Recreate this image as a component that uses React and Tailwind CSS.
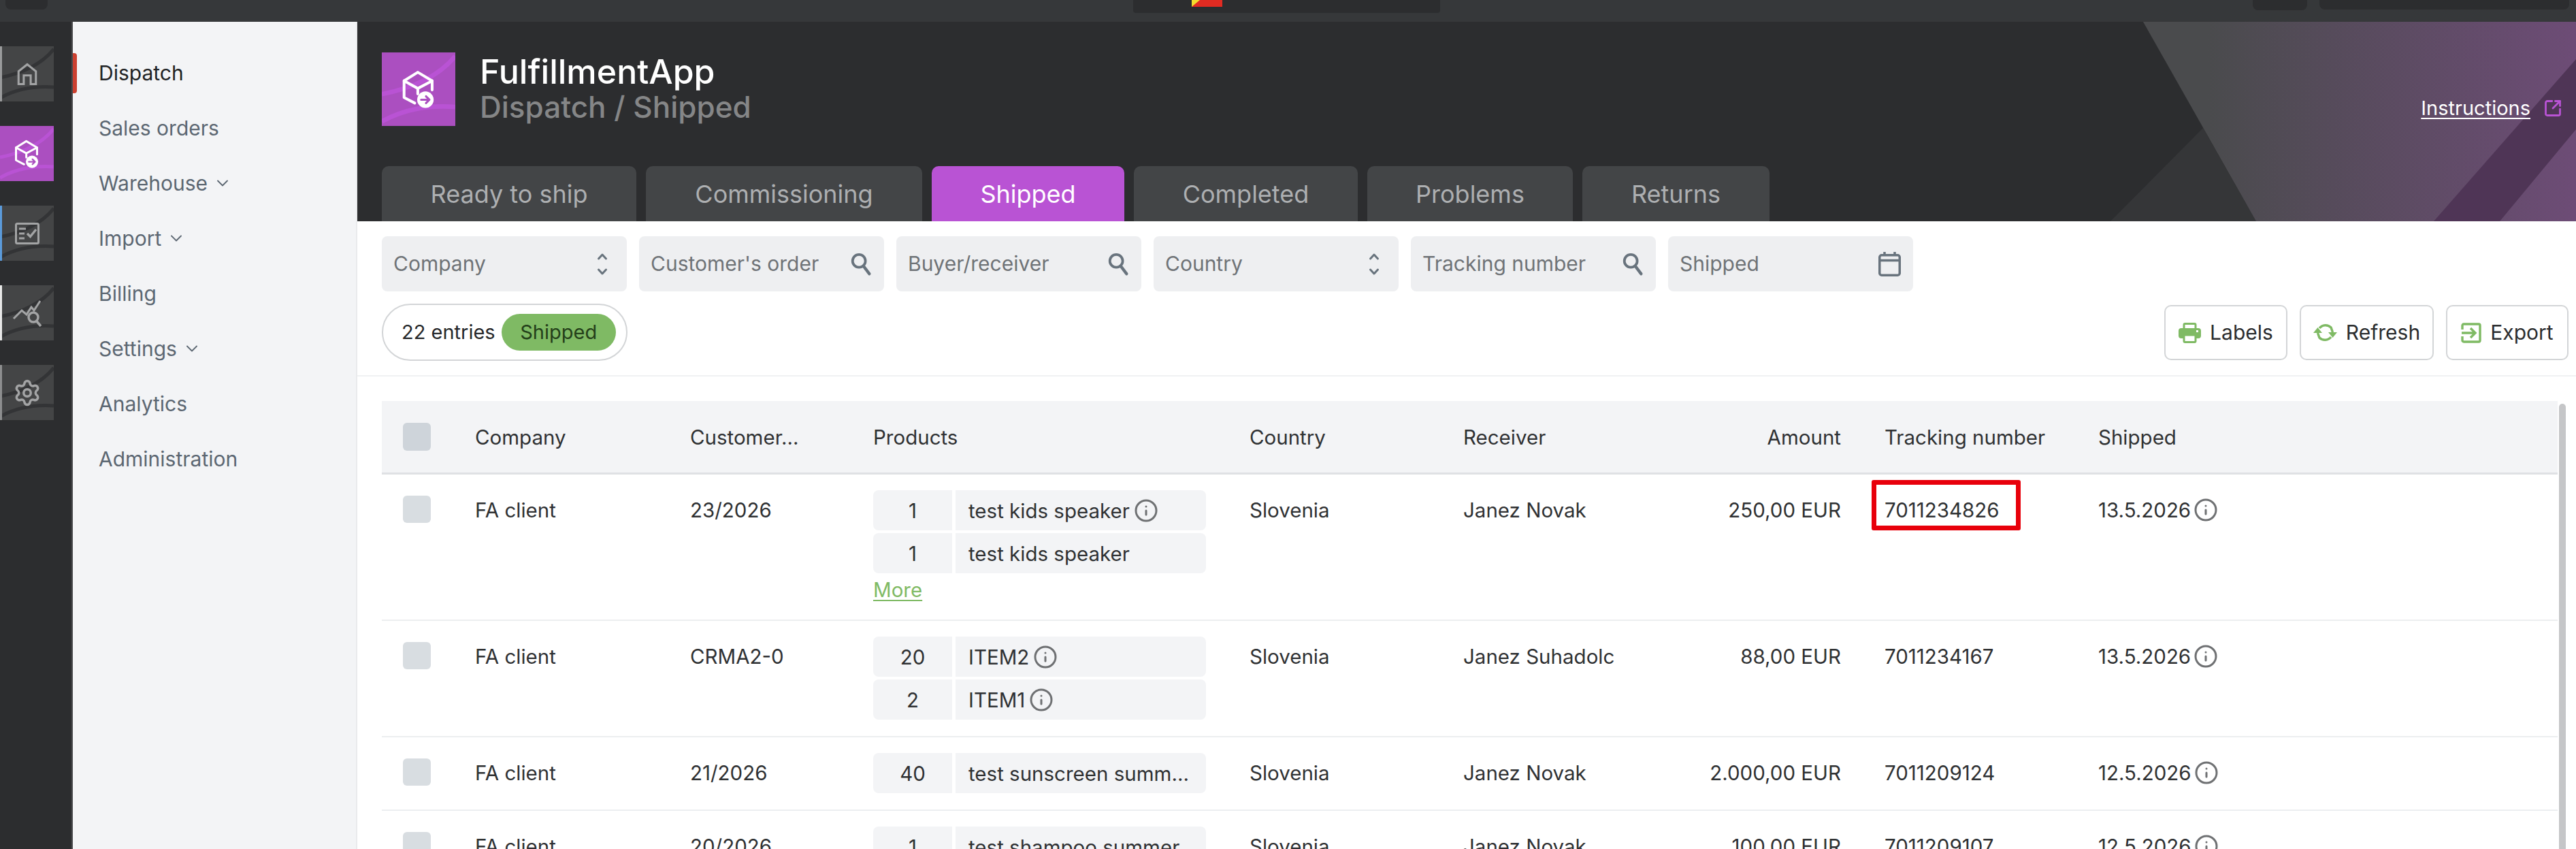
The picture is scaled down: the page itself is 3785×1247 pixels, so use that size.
import { ChevronDown, Info, Settings, SquareArrowOutUpRight } from 'lucide-react';

const tabs = [
    { name: 'Ready to ship', w: 'w-[374px]' },
    { name: 'Commissioning', w: 'w-[406px]' },
    { name: 'Shipped', w: 'w-[283px]', active: true },
    { name: 'Completed', w: 'w-[329px]' },
    { name: 'Problems', w: 'w-[302px]' },
    { name: 'Returns', w: 'w-[275px]' },
]

const menu = [
    { name: 'Dispatch', active: true },
    { name: 'Sales orders' },
    { name: 'Warehouse', more: true },
    { name: 'Import', more: true },
    { name: 'Billing' },
    { name: 'Settings', more: true },
    { name: 'Analytics' },
    { name: 'Administration' },
]

const rows = [
    {
        order: '23/2026', receiver: 'Janez Novak', amount: '250,00 EUR', tracking: '7011234826', shipped: '13.5.2026', more: true, marked: true,
        items: [{ qty: 1, name: 'test kids speaker', info: true }, { qty: 1, name: 'test kids speaker' }],
    },
    {
        order: 'CRMA2-0', receiver: 'Janez Suhadolc', amount: '88,00 EUR', tracking: '7011234167', shipped: '13.5.2026',
        items: [{ qty: 20, name: 'ITEM2', info: true }, { qty: 2, name: 'ITEM1', info: true }],
    },
    {
        order: '21/2026', receiver: 'Janez Novak', amount: '2.000,00 EUR', tracking: '7011209124', shipped: '12.5.2026',
        items: [{ qty: 40, name: 'test sunscreen summ...' }],
    },
    {
        order: '20/2026', receiver: 'Janez Novak', amount: '100,00 EUR', tracking: '7011209107', shipped: '12.5.2026',
        items: [{ qty: 1, name: 'test shampoo summer...' }],
    },
]

const columns = 'grid grid-cols-[106px_316px_269px_553px_314px_314px_305px_314px_1fr] pl-[31px]'

const BoxIcon = ({ className }) => (
    <svg viewBox="0 0 115 125" fill="none" className={className}>
        <path d="M45 108 L10 90 V35 L55 7 L102 35 V65" stroke="currentColor" strokeWidth="9" strokeLinejoin="round" strokeLinecap="round" />
        <path d="M10 35 L55 60 L102 35 M55 60 V78" stroke="currentColor" strokeWidth="9" strokeLinejoin="round" strokeLinecap="round" />
        <circle cx="80" cy="97" r="27" fill="currentColor" />
        <path d="M66 97 H92 M82 86 L93 97 L82 108" stroke="#ab4fc0" strokeWidth="7" strokeLinecap="round" strokeLinejoin="round" />
    </svg>
)

const HomeIcon = ({ className }) => (
    <svg viewBox="0 0 36 40" fill="none" className={className}>
        <path d="M3 37 V15 L18 3 L33 15 V37 H24 V22 H12 V37 Z" stroke="currentColor" strokeWidth="3.6" strokeLinejoin="miter" />
    </svg>
)

const TasksIcon = ({ className }) => (
    <svg viewBox="0 0 36 32" fill="none" className={className}>
        <rect x="1.5" y="1.5" width="33" height="29" rx="2" stroke="currentColor" strokeWidth="3" />
        <path d="M6 9 H16 M6 16 H14 M6 23 H14" stroke="currentColor" strokeWidth="3" />
        <path d="M18 16 L22.5 20.5 L31 10" stroke="currentColor" strokeWidth="3.4" />
    </svg>
)

const TrendIcon = ({ className }) => (
    <svg viewBox="0 0 44 40" fill="none" className={className}>
        <path d="M2 28 L14 16 L21 22 L28 11 L32 16 L41 2" stroke="currentColor" strokeWidth="3" />
        <circle cx="31" cy="26" r="7" stroke="currentColor" strokeWidth="3.4" />
        <path d="M36 32 L42 39" stroke="currentColor" strokeWidth="3.6" />
    </svg>
)

const SearchIcon = ({ className }) => (
    <svg viewBox="0 0 32 36" fill="none" className={className}>
        <circle cx="13" cy="13" r="10" stroke="currentColor" strokeWidth="4" />
        <path d="M20 21 L29 33" stroke="currentColor" strokeWidth="4.6" strokeLinecap="round" />
    </svg>
)

const UpDownIcon = ({ className }) => (
    <svg viewBox="0 0 16 34" fill="none" className={className}>
        <path d="M2.5 9 L8 3 L13.5 9 M2.5 25 L8 31 L13.5 25" stroke="currentColor" strokeWidth="3" strokeLinecap="round" strokeLinejoin="round" />
    </svg>
)

const CalendarIcon = ({ className }) => (
    <svg viewBox="0 0 33 37" fill="none" className={className}>
        <rect x="1.75" y="5.75" width="29.5" height="29.5" rx="3" stroke="currentColor" strokeWidth="3.5" />
        <path d="M2 13.5 H31 M9 1 V6 M24 1 V6" stroke="currentColor" strokeWidth="3.5" />
    </svg>
)

const PrinterIcon = ({ className }) => (
    <svg viewBox="0 0 33 30" fill="none" className={className}>
        <rect x="8" y="1.5" width="17" height="9" rx="1.5" stroke="currentColor" strokeWidth="3" />
        <rect x="0" y="8" width="33" height="15" rx="4" fill="currentColor" />
        <rect x="8" y="18" width="17" height="10.5" rx="1.5" fill="white" stroke="currentColor" strokeWidth="3" />
        <rect x="26" y="11" width="3" height="3" fill="white" />
    </svg>
)

const RefreshIcon = ({ className }) => (
    <svg viewBox="0 0 35 27" fill="none" className={className}>
        <path d="M9 7 A11.5 11.5 0 0 1 26 6 L28.5 13" stroke="currentColor" strokeWidth="3.5" />
        <path d="M26 20 A11.5 11.5 0 0 1 9 21 L6.5 14" stroke="currentColor" strokeWidth="3.5" />
        <path d="M22 13 H35 L28.5 21 Z M0 14 H13 L6.5 6 Z" fill="currentColor" />
    </svg>
)

const ExportIcon = ({ className }) => (
    <svg viewBox="0 0 30 30" fill="none" className={className}>
        <path d="M2 10 V4 A2 2 0 0 1 4 2 H26 A2 2 0 0 1 28 4 V26 A2 2 0 0 1 26 28 H4 A2 2 0 0 1 2 26 V20" stroke="currentColor" strokeWidth="3.4" />
        <path d="M1 15 H20 M14 8 L21 15 L14 22" stroke="currentColor" strokeWidth="3.4" />
    </svg>
)

const Tile = ({ children, stripe, active, size = 'h-[81px] w-[79px]' }) => (
    <div className={`relative flex items-center justify-center overflow-hidden ${size} ${active ? 'bg-[#ab4fc0] text-white' : 'bg-[#444546] text-[#a3a4a5]'}`}>
        <svg viewBox="0 0 79 81" preserveAspectRatio="none" className="absolute inset-0 h-full w-full" fill="none">
            <path d="M0 46 C30 40 60 28 79 4" stroke={active ? '#b953d4' : '#333436'} strokeWidth="5" />
            <path d="M0 76 C25 62 50 58 79 60" stroke={active ? '#b953d4' : '#333436'} strokeWidth="5" />
        </svg>
        {stripe && <span className={`absolute bottom-0 left-0 top-0 w-[3px] ${stripe}`} />}
        <div className="relative">{children}</div>
    </div>
)

const InfoDot = () => <Info className="h-9 w-9 shrink-0 text-[#6f7173]" strokeWidth={2} />

const Filter = ({ label, children }) => (
    <div className="flex h-[81px] w-[360px] items-center justify-between rounded-lg bg-[#eeeff1] pl-[17px] pr-[18px] text-[30px] text-[#6f7377]">
        <span>{label}</span>
        {children}
    </div>
)

const ActionButton = ({ icon, label, w }) => (
    <button className={`flex h-[81px] ${w} items-center justify-center gap-[13px] rounded-[10px] border-2 border-[#d3d5d7] bg-white text-[30px] text-[#2b2d2f]`}>
        {icon}
        {label}
    </button>
)

const App = () => {
    return <div className="flex h-[1247px] w-[3785px] flex-col overflow-hidden bg-white font-['Inter',sans-serif]">
        {/* browser bar, cut off at the top */}
        <div className="flex h-8 shrink-0 items-start bg-[#36383a]">
            <div className="ml-2 h-[14px] w-[62px] rounded-b-lg bg-[#2c2d2f]" />
            <div className="ml-[1595px] flex h-[19px] w-[451px] items-start rounded-b-sm bg-[#2c2d2f] pl-[86px]">
                <svg viewBox="0 0 45 10" className="h-[10px] w-[45px]">
                    <rect width="45" height="10" fill="#e12b22" />
                    <path d="M0 10 L12 0 H0 Z" fill="#f2dd2e" />
                </svg>
            </div>
            <div className="ml-[1194px] h-[15px] w-[80px] rounded-b-lg bg-[#2c2d2f]" />
            <div className="ml-[18px] h-[14px] w-[367px] rounded-b-lg bg-[#2c2d2f]" />
        </div>

        <div className="flex min-h-0 flex-1">
            {/* icon rail */}
            <div className="flex w-[107px] shrink-0 flex-col gap-9 border-r-2 border-[#4a4b4d] bg-[#2c2d2f] pt-9">
                <Tile stripe="bg-[#9a9b9c]"><HomeIcon className="h-[34px] w-[32px]" /></Tile>
                <Tile active><BoxIcon className="h-[42px] w-[39px]" /></Tile>
                <Tile stripe="bg-[#5b9bdb]"><TasksIcon className="h-[32px] w-[36px]" /></Tile>
                <Tile stripe="bg-[#e8e8e8]"><TrendIcon className="h-[40px] w-[44px]" /></Tile>
                <Tile stripe="bg-[#8d8e8f]"><Settings className="h-[42px] w-[42px]" strokeWidth={2} /></Tile>
            </div>

            {/* sub menu */}
            <div className="flex w-[418px] shrink-0 flex-col gap-[41px] border-r-2 border-[#e9eaec] bg-[#f3f4f6] pt-[55px] text-[30px] leading-[40px] text-[#5c6772]">
                {menu.map((item) => (
                    <div key={item.name} className={`relative flex items-center gap-[8px] pl-[38px] ${item.active ? 'text-[#212325]' : ''}`}>
                        {item.active && <span className="absolute -top-[9px] left-0 h-[59px] w-[6px] rounded-r bg-[#cb4030]" />}
                        {item.name}
                        {item.more && <ChevronDown className="h-[28px] w-[28px]" strokeWidth={1.6} />}
                    </div>
                ))}
            </div>

            <div className="min-w-0 flex-1">
                {/* page header */}
                <div className="relative h-[293px] overflow-hidden bg-[#2c2d2f] px-9 pt-[45px]">
                    <svg viewBox="0 0 3260 293" className="absolute inset-0 h-full w-full">
                        <defs>
                            <linearGradient id="headerFade" x1="0" x2="1" y1="0" y2="0">
                                <stop offset="0.15" stopColor="#4a4b4d" />
                                <stop offset="1" stopColor="#6d4c76" />
                            </linearGradient>
                        </defs>
                        <path d="M2576 293 L2712 156 L2790 293 Z" fill="#353638" />
                        <path d="M2624 0 H3260 V293 H2790 Z" fill="url(#headerFade)" />
                        <path d="M3051 293 L3260 55 V158 L3148 293 Z" fill="#4f3556" />
                    </svg>
                    <div className="relative flex items-center gap-9">
                        <Tile active size="h-[108px] w-[108px]"><BoxIcon className="h-[56px] w-[52px]" /></Tile>
                        <div>
                            <div className="text-[50px] font-medium leading-[52px] text-white">FulfillmentApp</div>
                            <div className="text-[44px] font-medium leading-[52px] text-[#858687]">Dispatch / Shipped</div>
                        </div>
                        <a className="absolute -right-4 top-[60px] flex items-center gap-[19px] text-[29px] text-white">
                            <span className="underline underline-offset-4">Instructions</span>
                            <SquareArrowOutUpRight className="h-[28px] w-[28px] text-[#b953d4]" strokeWidth={2.4} />
                        </a>
                    </div>
                    <div className="relative mt-[59px] flex gap-[14px]">
                        {tabs.map((tab) => (
                            <div key={tab.name} className={`flex h-[81px] ${tab.w} items-center justify-center rounded-t-[10px] text-[36px] ${tab.active ? 'bg-[#b953d4] text-white' : 'bg-[#434547] text-[#adafb1]'}`}>
                                {tab.name}
                            </div>
                        ))}
                    </div>
                </div>

                {/* filters */}
                <div className="px-9 pt-[22px]">
                    <div className="flex gap-[18px]">
                        <Filter label="Company"><UpDownIcon className="mr-[10px] h-[34px] w-[16px] text-[#68737d]" /></Filter>
                        <Filter label="Customer's order"><SearchIcon className="h-[34px] w-[32px] text-[#68737d]" /></Filter>
                        <Filter label="Buyer/receiver"><SearchIcon className="h-[34px] w-[32px] text-[#68737d]" /></Filter>
                        <Filter label="Country"><UpDownIcon className="mr-[10px] h-[34px] w-[16px] text-[#68737d]" /></Filter>
                        <Filter label="Tracking number"><SearchIcon className="h-[34px] w-[32px] text-[#68737d]" /></Filter>
                        <Filter label="Shipped"><CalendarIcon className="h-[37px] w-[33px] text-[#68737d]" /></Filter>
                    </div>
                    <div className="mt-[18px] flex items-start justify-between">
                        <div className="flex h-[84px] w-[361px] items-center gap-[9px] rounded-full border-2 border-[#d3d5d7] pl-[27px] text-[29px] text-[#26282a]">
                            22 entries
                            <span className="flex h-[54px] w-[168px] items-center justify-center rounded-full bg-[#7fba64] text-[#24401a]">Shipped</span>
                        </div>
                        <div className="-mr-[25px] flex gap-[18px] pt-[2px]">
                            <ActionButton w="w-[181px]" label="Labels" icon={<PrinterIcon className="h-[30px] w-[33px] text-[#7fba64]" />} />
                            <ActionButton w="w-[197px]" label="Refresh" icon={<RefreshIcon className="h-[27px] w-[35px] text-[#7fba64]" />} />
                            <ActionButton w="w-[180px]" label="Export" icon={<ExportIcon className="h-[30px] w-[30px] text-[#7fba64]" />} />
                        </div>
                    </div>
                </div>
                <div className="mt-[21px] h-[2px] bg-[#f0f1f3]" />

                {/* table */}
                <div className="relative mt-9 pl-9 pr-[27px] text-[29.5px] leading-[40px] text-[#2f3133]">
                    <div className={`${columns} h-[108px] items-center border-b-[3px] border-[#dfe1e4] bg-[#f3f4f6]`}>
                        <span className="h-[41px] w-[41px] rounded-md bg-[#ced4da]" />
                        <span>Company</span>
                        <span>Customer...</span>
                        <span>Products</span>
                        <span>Country</span>
                        <span>Receiver</span>
                        <span className="pr-[64px] text-right">Amount</span>
                        <span>Tracking number</span>
                        <span>Shipped</span>
                    </div>
                    {rows.map((row) => (
                        <div key={row.tracking} className={`${columns} border-b-2 border-[#eceef0] pb-6 pt-[23px]`}>
                            <span className="mt-[8px] h-[40px] w-[41px] rounded-md bg-[#d8dde1]" />
                            <span className="mt-[9px]">FA client</span>
                            <span className="mt-[9px]">{row.order}</span>
                            <div className="flex flex-col gap-1">
                                {row.items.map((item, i) => (
                                    <div key={i} className="flex h-[59px] w-[489px] gap-[5px]">
                                        <span className="flex w-[116px] items-center justify-center rounded-l-lg bg-[#f3f4f6]">{item.qty}</span>
                                        <span className="flex flex-1 items-center gap-[6px] rounded-r-lg bg-[#f3f4f6] pl-[19px]">
                                            {item.name}
                                            {item.info && <InfoDot />}
                                        </span>
                                    </div>
                                ))}
                                {row.more && <a className="text-[#7fba64] underline underline-offset-4">More</a>}
                            </div>
                            <span className="mt-[9px]">Slovenia</span>
                            <span className="mt-[9px]">{row.receiver}</span>
                            <span className="mt-[9px] pr-[64px] text-right">{row.amount}</span>
                            <span className="relative mt-[9px] self-start">
                                {row.tracking}
                                {row.marked && <span className="absolute -left-[19px] -top-[24px] h-[74px] w-[219px] rounded-[3px] border-[7px] border-[#e8000b]" />}
                            </span>
                            <span className="mt-[9px] flex items-center gap-[4px] self-start">{row.shipped}<InfoDot /></span>
                        </div>
                    ))}
                    <div className="absolute bottom-0 right-[15px] top-1 w-[10px] rounded-full bg-[#c5c6c8]" />
                </div>
            </div>
        </div>
    </div>
}

export default App
